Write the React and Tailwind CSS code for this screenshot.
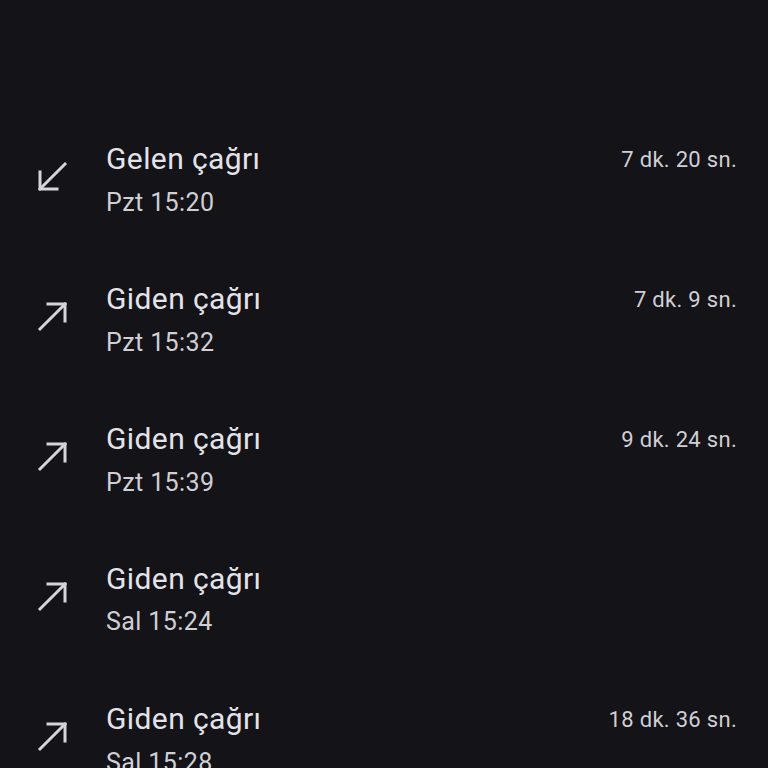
import React from 'react';

const calls = [
  { type: 'in', title: 'Gelen çağrı', time: 'Pzt 15:20', duration: '7 dk. 20 sn.' },
  { type: 'out', title: 'Giden çağrı', time: 'Pzt 15:32', duration: '7 dk. 9 sn.' },
  { type: 'out', title: 'Giden çağrı', time: 'Pzt 15:39', duration: '9 dk. 24 sn.' },
  { type: 'out', title: 'Giden çağrı', time: 'Sal 15:24', duration: '' },
  { type: 'out', title: 'Giden çağrı', time: 'Sal 15:28', duration: '18 dk. 36 sn.' },
];

const CallIcon = ({ type }) => (
  <svg width="34" height="34" viewBox="0 0 34 34" fill="none" stroke="#d6d5da" strokeWidth="3" strokeLinecap="square">
    {type === 'in' ? (
      <>
        <path d="M29 4 L4 29" />
        <path d="M4 12 V29 H21" />
      </>
    ) : (
      <>
        <path d="M4 29 L29 4" />
        <path d="M12 4 H29 V21" />
      </>
    )}
  </svg>
);

export default function App() {
  return (
    <div
      className="w-[768px] h-[768px] overflow-hidden bg-[#141318] pt-[110px]"
      style={{ fontFamily: 'Roboto, "Open Sans", sans-serif' }}
    >
      {calls.map((c, i) => (
        <div key={i} className="h-[140px] flex items-center pl-[36px] pr-[31px]">
          <div className="w-[70px] flex items-center mt-[-6px]">
            <CallIcon type={c.type} />
          </div>
          <div className="flex-1 flex flex-col">
            <div className="flex items-center justify-between">
              <span className="text-[30px] leading-[42px] tracking-[0.4px] text-[#e4e3e8]">{c.title}</span>
              <span className="text-[22px] leading-[42px] tracking-[0.3px] text-[#d0cfd4] mt-[3px]">{c.duration}</span>
            </div>
            <span className="text-[25px] leading-[42px] tracking-[0.4px] text-[#d0cfd4] mt-[1px]">{c.time}</span>
          </div>
        </div>
      ))}
    </div>
  );
}
